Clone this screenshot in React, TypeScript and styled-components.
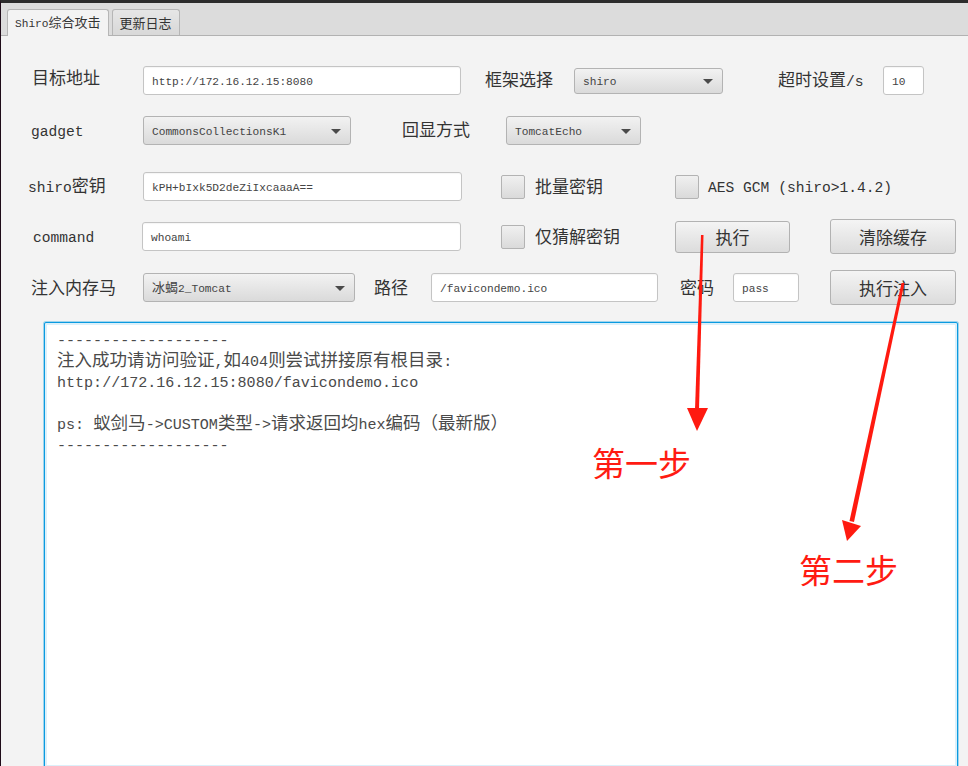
import React from "react";
import styled, { createGlobalStyle, css } from "styled-components";

const Global = createGlobalStyle`
  html, body { margin: 0; padding: 0; background: #f3f3f3; overflow: hidden; }
  #root { width: 968px; height: 766px; }
`;

const CJK_RE = /([\u2E80-\u9FFF\u3000-\u303F\uFF00-\uFFEF]+)/;

const Run = styled.span`
  white-space: pre;
`;

const LatinRun = styled.span`
  font-family: "Liberation Mono", "DejaVu Sans Mono", monospace;
  font-size: 0.86em;
`;

const CjkRun = styled.span`
  font-family: "Noto Sans CJK SC", sans-serif;
`;

function T({ children }: { children: string }) {
  const parts = children.split(CJK_RE);
  return (
    <Run>
      {parts.map((p, i) =>
        p === "" ? null : i % 2 ? (
          <CjkRun key={i}>{p}</CjkRun>
        ) : (
          <LatinRun key={i}>{p}</LatinRun>
        )
      )}
    </Run>
  );
}

const Window = styled.div`
  position: relative;
  box-sizing: border-box;
  width: 968px;
  height: 766px;
  overflow: hidden;
  border-top: 3px solid #2c2c2c;
  border-left: 1px solid #1e0b18;
  background: #f3f3f3;
  font-family: "Noto Sans CJK SC", sans-serif;
  color: #333;
  display: flex;
  flex-direction: column;
`;

const TabBar = styled.div`
  box-sizing: border-box;
  height: 33px;
  flex: none;
  background: #dcdcdc;
  border-bottom: 1px solid #b2b2b2;
  padding: 6px 0 0 6px;
  display: flex;
  align-items: flex-start;
  gap: 3px;
`;

const Tab = styled.div<{ $active?: boolean }>`
  box-sizing: border-box;
  height: 27px;
  padding: 0 7px;
  display: flex;
  align-items: center;
  font-size: 13px;
  line-height: 1;
  color: #333;
  border: 1px solid #b6b6b6;
  border-bottom: none;
  border-radius: 3px 3px 0 0;
  ${(p) =>
    p.$active
      ? css`
          background: #f3f3f3;
          position: relative;
          z-index: 1;
        `
      : css`
          height: 26px;
          background: linear-gradient(#e6e6e6, #d8d8d8);
        `}
`;

const Content = styled.div`
  flex: 1;
  display: flex;
  flex-direction: column;
`;

const Row = styled.div<{ $mt: number; $h: number }>`
  display: flex;
  align-items: center;
  margin-top: ${(p) => p.$mt}px;
  height: ${(p) => p.$h}px;
  flex: none;
`;

const Label = styled.div<{ $ml?: number; $w?: number; $dy?: number }>`
  margin-left: ${(p) => p.$ml ?? 0}px;
  width: ${(p) => (p.$w ? `${p.$w}px` : "auto")};
  flex: none;
  font-size: 17px;
  line-height: 1;
  color: #333;
  white-space: nowrap;
  position: relative;
  top: ${(p) => p.$dy ?? -1}px;
`;

const Input = styled.div<{ $w: number; $ml?: number }>`
  box-sizing: border-box;
  width: ${(p) => p.$w}px;
  height: 29px;
  margin-left: ${(p) => p.$ml ?? 0}px;
  flex: none;
  background: #fff;
  border: 1px solid #c4c4c4;
  border-radius: 3px;
  box-shadow: inset 0 1px 1px rgba(0, 0, 0, 0.04);
  display: flex;
  align-items: center;
  padding-left: 8px;
  font-size: 13px;
  line-height: 1;
  color: #444;
  white-space: nowrap;
  overflow: hidden;
`;

const Select = styled.div<{ $w: number; $h?: number; $ml?: number }>`
  box-sizing: border-box;
  position: relative;
  width: ${(p) => p.$w}px;
  height: ${(p) => p.$h ?? 29}px;
  margin-left: ${(p) => p.$ml ?? 0}px;
  flex: none;
  background: linear-gradient(#f2f2f2, #dadada);
  border: 1px solid #b3b3b3;
  border-radius: 3px;
  display: flex;
  align-items: center;
  padding-left: 8px;
  font-size: 13px;
  line-height: 1;
  color: #444;
  white-space: nowrap;
`;

const Caret = styled.span`
  position: absolute;
  right: 9px;
  top: 50%;
  margin-top: -2px;
  width: 0;
  height: 0;
  border-left: 5px solid transparent;
  border-right: 5px solid transparent;
  border-top: 5px solid #4a4a4a;
`;

const Check = styled.div<{ $ml?: number }>`
  box-sizing: border-box;
  width: 24px;
  height: 24px;
  margin-left: ${(p) => p.$ml ?? 0}px;
  flex: none;
  background: linear-gradient(#f0f0f0, #dadada);
  border: 1px solid #b3b3b3;
  border-radius: 2px;
`;

const Button = styled.div<{ $w: number; $h: number; $ml?: number }>`
  box-sizing: border-box;
  width: ${(p) => p.$w}px;
  height: ${(p) => p.$h}px;
  margin-left: ${(p) => p.$ml ?? 0}px;
  flex: none;
  background: linear-gradient(#f4f4f4, #dcdcdc);
  border: 1px solid #b2b2b2;
  border-radius: 3px;
  display: flex;
  align-items: center;
  justify-content: center;
  font-size: 17px;
  line-height: 1;
  color: #333;
`;

const Console = styled.div`
  box-sizing: border-box;
  margin-top: 17px;
  margin-left: 43px;
  width: 914px;
  height: 446px;
  flex: none;
  background: #fff;
  border: 1px solid #0a9ae0;
  border-radius: 2px;
  box-shadow: 0 0 0 1px rgba(10, 154, 224, 0.35), inset 0 0 0 2px #dcf0fa;
  padding: 4px 12px;
  font-size: 17.5px;
  color: #4a4a4a;
`;

const ConsoleLine = styled.div`
  height: 21px;
  line-height: 21px;
  white-space: pre;
`;

const Overlay = styled.svg`
  position: absolute;
  left: -1px;
  top: -3px;
  pointer-events: none;
`;

const Note = styled.div<{ $x: number; $y: number }>`
  position: absolute;
  left: ${(p) => p.$x}px;
  top: ${(p) => p.$y}px;
  font-family: "Noto Sans CJK SC", sans-serif;
  font-size: 33px;
  line-height: 1;
  color: #ff1b12;
  white-space: nowrap;
`;

const consoleLines = [
  "-------------------",
  "注入成功请访问验证,如404则尝试拼接原有根目录:",
  "http://172.16.12.15:8080/favicondemo.ico",
  "",
  "ps: 蚁剑马->CUSTOM类型->请求返回均hex编码（最新版）",
  "-------------------",
];

export default function App() {
  return (
    <>
      <Global />
      <Window>
        <TabBar>
          <Tab $active>
            <T>Shiro综合攻击</T>
          </Tab>
          <Tab>
            <T>更新日志</T>
          </Tab>
        </TabBar>
        <Content>
          <Row $mt={30} $h={29}>
            <Label $ml={31} $w={111} $dy={-4}>
              <T>目标地址</T>
            </Label>
            <Input $w={318}>
              <T>http://172.16.12.15:8080</T>
            </Input>
            <Label $ml={24} $w={89} $dy={-2}>
              <T>框架选择</T>
            </Label>
            <Select $w={149} $h={26}>
              <T>shiro</T>
              <Caret />
            </Select>
            <Label $ml={55} $w={105}>
              <T>超时设置/s</T>
            </Label>
            <Input $w={41}>
              <T>10</T>
            </Input>
          </Row>

          <Row $mt={21} $h={29}>
            <Label $ml={30} $w={112}>
              <T>gadget</T>
            </Label>
            <Select $w={208}>
              <T>CommonsCollectionsK1</T>
              <Caret />
            </Select>
            <Label $ml={51} $w={104} $dy={-2}>
              <T>回显方式</T>
            </Label>
            <Select $w={135}>
              <T>TomcatEcho</T>
              <Caret />
            </Select>
          </Row>

          <Row $mt={27} $h={29}>
            <Label $ml={27} $w={115}>
              <T>shiro密钥</T>
            </Label>
            <Input $w={319}>
              <T>kPH+bIxk5D2deZiIxcaaaA==</T>
            </Input>
            <Check $ml={39} />
            <Label $ml={10} $w={140}>
              <T>批量密钥</T>
            </Label>
            <Check />
            <Label $ml={9}>
              <T>AES GCM (shiro&gt;1.4.2)</T>
            </Label>
          </Row>

          <Row $mt={18} $h={35}>
            <Label $ml={32} $w={109}>
              <T>command</T>
            </Label>
            <Input $w={319}>
              <T>whoami</T>
            </Input>
            <Check $ml={40} />
            <Label $ml={10} $w={140}>
              <T>仅猜解密钥</T>
            </Label>
            <Button $w={115} $h={32}>
              <T>执行</T>
            </Button>
            <Button $w={126} $h={35} $ml={40}>
              <T>清除缓存</T>
            </Button>
          </Row>

          <Row $mt={16} $h={35}>
            <Label $ml={30} $w={112}>
              <T>注入内存马</T>
            </Label>
            <Select $w={212}>
              <T>冰蝎2_Tomcat</T>
              <Caret />
            </Select>
            <Label $ml={19} $w={57}>
              <T>路径</T>
            </Label>
            <Input $w={227}>
              <T>/favicondemo.ico</T>
            </Input>
            <Label $ml={22} $w={53}>
              <T>密码</T>
            </Label>
            <Input $w={66}>
              <T>pass</T>
            </Input>
            <Button $w={126} $h={35} $ml={31}>
              <T>执行注入</T>
            </Button>
          </Row>

          <Console>
            {consoleLines.map((l, i) => (
              <ConsoleLine key={i}>{l === "" ? "\u00a0" : <T>{l}</T>}</ConsoleLine>
            ))}
          </Console>
        </Content>

        <Overlay width={968} height={766} viewBox="0 0 968 766">
          <polygon points="701,235 703.5,235 699,410 695,410" fill="#ff1a10" />
          <polygon points="687,408 708,408 697,431" fill="#ff1a10" />
          <polygon points="901.5,283 904.5,283 854,522 849.5,521" fill="#ff1a10" />
          <polygon points="842,520 861,526 847,541" fill="#ff1a10" />
        </Overlay>
        <Note $x={591} $y={443}>第一步</Note>
        <Note $x={798} $y={550}>第二步</Note>
      </Window>
    </>
  );
}
